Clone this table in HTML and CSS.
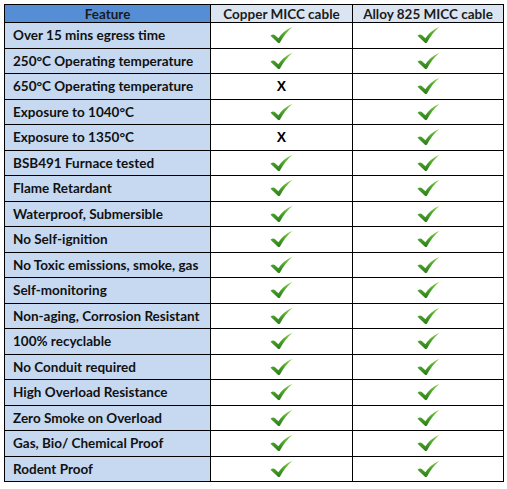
FILE: index.html
```html
<!DOCTYPE html>
<html>
<head>
<meta charset="utf-8">
<link rel="stylesheet" href="styles.css">
</head>
<body>
<svg width="0" height="0" class="defs">
  <defs>
    <linearGradient id="g" x1="0" y1="0" x2="0" y2="1">
      <stop offset="0" stop-color="#8fd14f"/>
      <stop offset="0.5" stop-color="#4aa32a"/>
      <stop offset="1" stop-color="#2a7a18"/>
    </linearGradient>
    <symbol id="tick" viewBox="0 0 22 17">
      <path d="M0.5 9.2 Q2.5 7.6 4.6 8.4 L8 11.6 Q13 4.2 21.5 0.6 Q14.6 6.4 9.6 15.6 Q8.6 16.8 7.6 15.8 Z" fill="url(#g)"/>
    </symbol>
  </defs>
</svg>
<table class="grid">
  <colgroup><col class="c1"><col class="c2"><col class="c3"></colgroup>
  <thead>
    <tr><th class="hf">Feature</th><th>Copper MICC cable</th><th>Alloy 825 MICC cable</th></tr>
  </thead>
  <tbody id="rows"></tbody>
</table>
<script src="app.js"></script>
</body>
</html>
```
FILE: app.js
```js
const rows = [
  ["Over 15 mins egress time", 1, 1],
  ["250°C Operating temperature", 1, 1],
  ["650°C Operating temperature", 0, 1],
  ["Exposure to 1040°C", 1, 1],
  ["Exposure to 1350°C", 0, 1],
  ["BSB491 Furnace tested", 1, 1],
  ["Flame Retardant", 1, 1],
  ["Waterproof, Submersible", 1, 1],
  ["No Self-ignition", 1, 1],
  ["No Toxic emissions, smoke, gas", 1, 1],
  ["Self-monitoring", 1, 1],
  ["Non-aging, Corrosion Resistant", 1, 1],
  ["100% recyclable", 1, 1],
  ["No Conduit required", 1, 1],
  ["High Overload Resistance", 1, 1],
  ["Zero Smoke on Overload", 1, 1],
  ["Gas, Bio/ Chemical Proof", 1, 1],
  ["Rodent Proof", 1, 1]
];
const tick = '<svg class="tick" width="23" height="18"><use href="#tick"/></svg>';
const cell = v => '<td class="mark">' + (v ? tick : '<span class="x">X</span>') + '</td>';
document.getElementById('rows').innerHTML = rows.map(r =>
  '<tr><td class="feat">' + r[0] + '</td>' + cell(r[1]) + cell(r[2]) + '</tr>'
).join('');
```
FILE: styles.css
```css
html, body { margin: 0; padding: 0; background: #ffffff; }
body { padding: 4px 0 0 4px; }
.defs { position: absolute; }
.grid {
  border-collapse: collapse;
  table-layout: fixed;
  width: 499px;
  font-family: Lato, "Liberation Sans", sans-serif;
  font-weight: 700;
  font-size: 13.5px;
  color: #111;
}
.c1 { width: 206px; }
.c2 { width: 142px; }
.c3 { width: 151px; }
.grid th, .grid td { border: 1px solid #000; padding: 0; line-height: 16px; }
.grid th {
  height: 17px;
  background: #dbe5f1;
  font-size: 13.5px;
  text-align: center;
  color: #1b1b1b;
}
.grid th.hf { background: #558ed5; }
.grid td { height: 24.5px; }
.feat {
  background: #c6d9f1;
  padding-left: 8px !important;
  white-space: nowrap;
}
.mark { text-align: center; vertical-align: middle; }
.tick { display: block; margin: 0 auto; }
.x { font-family: "Liberation Sans", sans-serif; font-size: 14px; font-weight: 700; color: #000; }
```
